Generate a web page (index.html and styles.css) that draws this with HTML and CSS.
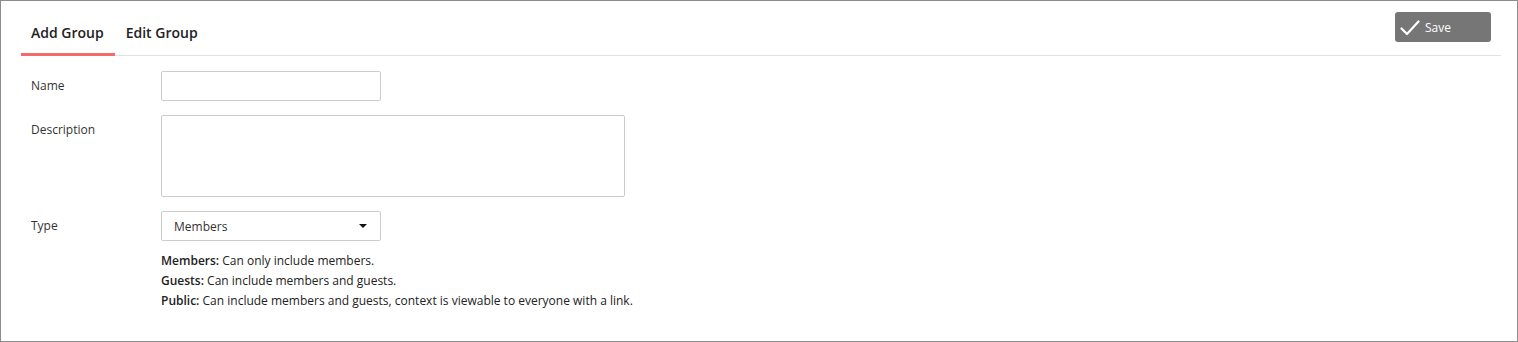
FILE: index.html
```html
<!DOCTYPE html>
<html lang="en">
<head>
<meta charset="utf-8">
<title>Add Group</title>
<link rel="stylesheet" href="styles.css">
</head>
<body>
<div class="frame">
  <div class="header">
    <nav class="tabs">
      <a class="tab active">Add Group</a>
      <a class="tab">Edit Group</a>
    </nav>
    <button class="save-btn" type="button">
      <svg class="check" width="20" height="16" viewBox="0 0 20 16" aria-hidden="true">
        <path d="M1.5 8.5 L7 14 L18.5 1.5" fill="none" stroke="#fff" stroke-width="2.2" stroke-linecap="round" stroke-linejoin="round"/>
      </svg>
      <span>Save</span>
    </button>
  </div>
  <form class="form">
    <label class="label" for="name">Name</label>
    <div class="field"><input id="name" class="input" type="text"></div>

    <label class="label" for="desc">Description</label>
    <div class="field"><textarea id="desc" class="textarea"></textarea></div>

    <label class="label">Type</label>
    <div class="field">
      <div class="select">
        <span>Members</span>
        <span class="caret"></span>
      </div>
      <div class="help">
        <p><b>Members:</b> Can only include members.</p>
        <p><b>Guests:</b> Can include members and guests.</p>
        <p><b>Public:</b> Can include members and guests, context is viewable to everyone with a link.</p>
      </div>
    </div>
  </form>
</div>
</body>
</html>
```

FILE: styles.css
```css
* { box-sizing: border-box; }
html, body { margin: 0; padding: 0; background: #fff; }
body {
  font-family: "Open Sans", "Liberation Sans", sans-serif;
  color: #333;
}
.frame {
  width: 1518px;
  height: 342px;
  border: 1px solid #8c8c8c;
}
.header {
  display: flex;
  align-items: flex-start;
  margin: 0 16px 0 20px;
  height: 55px;
  border-bottom: 1px solid #e2e2e2;
}
.tabs { display: flex; }
.tab {
  display: block;
  height: 55px;
  padding: 22px 11px 0 10px;
  font-size: 14px;
  line-height: 20px;
  font-weight: 600;
  color: #222;
  border-bottom: 3px solid transparent;
  cursor: pointer;
}
.tab + .tab { padding-left: 11px; }
.tab.active { border-bottom-color: #f46b6b; }
.save-btn {
  margin: 11px 10px 0 auto;
  width: 96px;
  height: 30px;
  border: none;
  border-radius: 3px;
  background: #767676;
  color: #fff;
  font-family: inherit;
  font-size: 12px;
  display: flex;
  align-items: center;
  padding: 0 0 0 5px;
  gap: 5px;
  cursor: pointer;
}
.check { display: block; margin-top: 2px; }
.form {
  display: grid;
  grid-template-columns: 130px 1fr;
  row-gap: 14px;
  padding: 15px 0 0 30px;
}
.label {
  font-size: 12px;
  line-height: 30px;
  color: #333;
}
.field { display: flex; flex-direction: column; align-items: flex-start; }
.input {
  width: 220px;
  height: 30px;
  border: 1px solid #ccc;
  border-radius: 2px;
  margin: 0;
}
.textarea {
  width: 464px;
  height: 82px;
  border: 1px solid #ccc;
  border-radius: 2px;
  margin: 0;
  resize: none;
  display: block;
}
.select {
  width: 220px;
  height: 30px;
  border: 1px solid #ccc;
  border-radius: 2px;
  display: flex;
  align-items: center;
  justify-content: space-between;
  padding: 0 13px 0 12px;
  font-size: 12px;
  color: #333;
}
.caret {
  width: 0;
  height: 0;
  border-left: 4px solid transparent;
  border-right: 4px solid transparent;
  border-top: 4px solid #111;
}
.help {
  margin-top: 10px;
  font-size: 12px;
  line-height: 20px;
  color: #222;
}
.help p { margin: 0; }
.help b { font-weight: 600; }
```
